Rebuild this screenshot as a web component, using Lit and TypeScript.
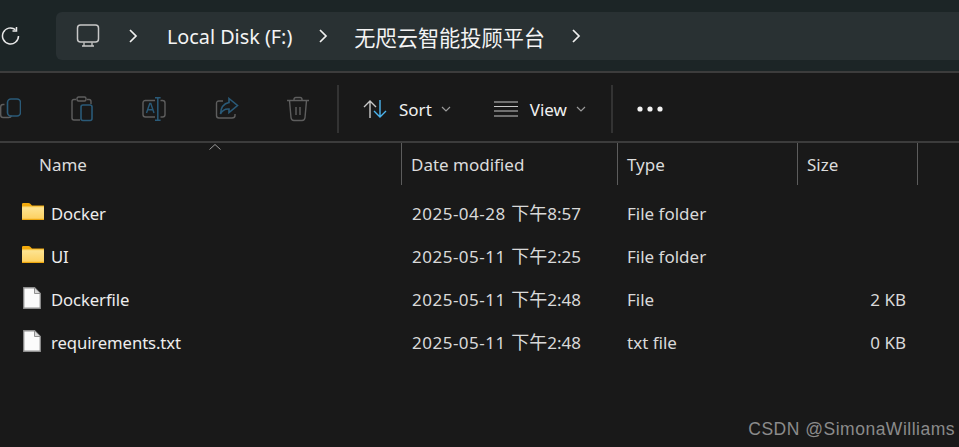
import { LitElement, html, css, svg } from "lit";
import { customElement } from "lit/decorators.js";

const folder = svg`<svg class="ficon folder" width="22" height="17" viewBox="0 0 22 17">
  <defs><linearGradient id="fg" x1="0" y1="0" x2="0" y2="1"><stop offset="0" stop-color="#fde596"/><stop offset="1" stop-color="#fdcf5c"/></linearGradient></defs>
  <path d="M0 5V1.200Q0 0 1.200 0H6.500Q7.500 0 8 .6L10 2.500H22V5Z" fill="#f3aa0c"/>
  <rect x="0" y="3.500" width="22" height="13.500" rx=".8" fill="url(#fg)"/>
  <rect x="0" y="15.800" width="22" height="1.200" fill="#eea70f"/>
  <rect x="0" y="3.200" width="22" height="1" fill="#f8c544"/>
</svg>`;
const file = svg`<svg class="ficon file" width="18" height="22" viewBox="0 0 18 22"><path d="M.75.75H11.500L17.250 6.500V21.250H.75Z" fill="#fbfbfb" stroke="#8f8f8f" stroke-width="1.300"/><path d="M11.500 1V6.500H17" fill="#d9d9d9" stroke="#8f8f8f"/></svg>`;

const rows = [
  { icon: folder, name: "Docker", ymd: "2025-04-28", time: "8:57", type: "File folder", size: "" },
  { icon: folder, name: "UI", ymd: "2025-05-11", time: "2:25", type: "File folder", size: "" },
  { icon: file, name: "Dockerfile", ymd: "2025-05-11", time: "2:48", type: "File", size: "2 KB" },
  { icon: file, name: "requirements.txt", ymd: "2025-05-11", time: "2:48", type: "txt file", size: "0 KB" },
];

const chev = svg`<svg class="crumbchev" width="10" height="16" viewBox="0 0 10 16"><path d="M2 2L8 8L2 14" fill="none" stroke="#f0f0f0" stroke-width="1.700"/></svg>`;
const drop = svg`<svg class="drop" width="10" height="6" viewBox="0 0 10 6"><path d="M1 1L5 5L9 1" fill="none" stroke="#9a9a9a" stroke-width="1.200"/></svg>`;

@customElement("app-root")
export class AppRoot extends LitElement {
  static styles = css`
    :host {
      display: block;
      position: relative;
      width: 959px;
      height: 447px;
      overflow: hidden;
      background: #191919;
      color: #e8e8e8;
      font-family: "Noto Sans", "Noto Sans CJK SC", sans-serif;
      font-size: 17px;
    }
    .nav {
      box-sizing: border-box;
      background: #1c2526;
      border-bottom: 2px solid #3c3c3c;
      height: 73px;
      display: flex;
      align-items: flex-start;
      padding: 12px 0 0 1px;
    }
    .refresh { margin: 14px 0 0 0; flex: none; }
    .addr {
      margin-left: 35px;
      flex: 1;
      height: 48px;
      background: #293133;
      border-radius: 6px 0 0 6px;
      display: flex;
      align-items: center;
      color: #f4f4f4;
      font-size: 19.8px;
    }
    .addr span { display: flex; }
    .pc { margin-left: 20px; flex: none; }
    .crumbchev { flex: none; }
    .c1 { margin-left: 28px; }
    .t1 { margin-left: 29px; }
    .c2 { margin-left: 26px; }
    .t2 { margin-left: 26px; font-size: 21.2px; }
    .c3 { margin-left: 26px; }
    .bar {
      height: 70px;
      box-sizing: border-box;
      border-bottom: 2px solid #3c3c3c;
      display: flex;
      align-items: center;
      padding-top: 4px;
      font-size: 17px;
      color: #f0f0f0;
    }
    .bar svg { flex: none; }
    .sep { width: 2px; height: 48px; background: #333; flex: none; }
    .tool { display: flex; align-items: center; flex: none; }
    .row, .head {
      display: grid;
      grid-template-columns: 402px 216px 180px 120px;
    }
    .head {
      height: 44px;
      position: relative;
      color: #dcdcdc;
    }
    .head div {
      box-sizing: border-box;
      border-right: 1px solid #5c5c5c;
      padding: 10px 0 0 10px;
      height: 42px;
    }
    .head .n { padding-left: 39px; }
    .head .f { margin-left: -1px; }
    .sort { position: absolute; left: 209px; top: 1px; }
    .list { padding-top: 5px; }
    .row {
      height: 43px;
      align-items: center;
      color: #d9d9d9;
      line-height: 24px;
    }
    .row .name { color: #ededed; display: flex; align-items: center; font-size: 16.7px; letter-spacing: -0.1px; }
    .ficon { flex: none; }
    .folder { margin: -5px 7px 0 22px; }
    .file { margin: -4px 10px 0 23px; }
    .row .c { padding-left: 9px; }
    .row .d { padding-left: 10px; }
    .ymd { letter-spacing: 0.5px; }
    .cjk { font-size: 18px; line-height: 1; margin-left: 1px; }
    .row .s { text-align: right; padding-right: 12px; }
    .mark {
      position: absolute;
      right: 4px;
      bottom: 7px;
      font-family: "Liberation Sans", sans-serif;
      font-size: 17.5px;
      color: #8b8b8b;
      letter-spacing: 0.5px;
    }
  `;

  render() {
    return html`
      <div class="nav">
        <svg class="refresh" width="20" height="20" viewBox="0 0 20 20"><path d="M17.500 10A8 8 0 1 1 14.500 3.700" fill="none" stroke="#e8e8e8" stroke-width="1.500"/><path d="M15.500 1V5H11.500" fill="none" stroke="#e8e8e8" stroke-width="1.500"/></svg>
        <div class="addr">
          <svg class="pc" width="24" height="24" viewBox="0 0 24 24"><rect x="1.500" y="1" width="21" height="17" rx="3" fill="none" stroke="#c8c8c8" stroke-width="1.500"/><path d="M8 18.500V22M16 18.500V22M6 22H18" fill="none" stroke="#c8c8c8" stroke-width="1.300"/></svg>
          <span class="c1">${chev}</span>
          <span class="t1">Local Disk (F:)</span>
          <span class="c2">${chev}</span>
          <span class="t2">无咫云智能投顾平台</span>
          <span class="c3">${chev}</span>
        </div>
      </div>
      <div class="bar">
        <svg width="21" height="22" viewBox="0 0 21 22"><path d="M4.500 6.500H3Q.7 6.500 .7 9V17Q.7 19.500 3 19.500H8.500Q11 19.500 11.500 17.500" fill="none" stroke="#5e5e5e" stroke-width="1.400"/><rect x="7.500" y="1" width="13" height="17" rx="3.500" fill="none" stroke="#2a5a78" stroke-width="1.600"/></svg>
        <svg style="margin-left:50px" width="22" height="26" viewBox="0 0 22 26"><path d="M5 3.500H3Q1 3.500 1 5.500V22Q1 24 3 24H9" fill="none" stroke="#5e5e5e" stroke-width="1.400"/><path d="M16 3.500H18Q20 3.500 20 5.500V8" fill="none" stroke="#5e5e5e" stroke-width="1.400"/><rect x="6" y="1" width="9" height="4" rx="1.500" fill="none" stroke="#5e5e5e" stroke-width="1.400"/><rect x="10" y="9" width="11" height="15.500" rx="2" fill="none" stroke="#2a5a78" stroke-width="1.600"/></svg>
        <svg style="margin-left:49px" width="24" height="24" viewBox="0 0 24 24"><path d="M13 3.500H3.500Q1 3.500 1 6V17.500Q1 20 3.500 20H13M18.500 3.500H20.500Q23 3.500 23 6V17.500Q23 20 20.500 20H18.500" fill="none" stroke="#5e5e5e" stroke-width="1.400"/><path d="M4.500 16L7.800 6.500H8.800L12 16M5.800 12.800H10.800" fill="none" stroke="#2a5a78" stroke-width="1.400"/><path d="M15.800 .8V23.200M13 .8H18.600M13 23.200H18.600" fill="none" stroke="#2a5a78" stroke-width="1.500"/></svg>
        <svg style="margin-left:49px" width="24" height="24" viewBox="0 0 24 24"><path d="M8 4H4Q1.500 4 1.500 6.500V18.500Q1.500 21 4 21H17Q20 21 20 18.500V17" fill="none" stroke="#5e5e5e" stroke-width="1.400"/><path d="M14 1.500L22.500 8.500L14 15.500V12Q8 11.500 5.500 17Q6 7 14 5.500Z" fill="none" stroke="#2a5a78" stroke-width="1.600"/></svg>
        <svg style="margin-left:47px" width="24" height="26" viewBox="0 0 24 26"><path d="M1 4.500H23M8 4.500V3.500Q8 1.500 10 1.500H14Q16 1.500 16 3.500V4.500M3.500 4.500L5 21.500Q5.300 24.500 8 24.500H16Q18.700 24.500 19 21.500L20.500 4.500M10 11V19M14 11V19" fill="none" stroke="#5e5e5e" stroke-width="1.400"/></svg>
        <div class="sep" style="margin-left:27px"></div>
        <div class="tool" style="margin-left:23px">
          <svg width="26" height="20" viewBox="0 0 26 20"><path d="M8 19V2M2 8L8 2L14 8" fill="none" stroke="#c8c8c8" stroke-width="1.400"/><path d="M18 1V18M12 12L18 18L24 12" fill="none" stroke="#4cb4ee" stroke-width="1.400"/></svg>
          <span style="margin-left:11px">Sort</span>
          <span style="margin-left:9px;display:flex">${drop}</span>
        </div>
        <div class="tool" style="margin-left:43px">
          <svg width="24" height="16" viewBox="0 0 24 16"><path d="M0 1H24M0 5.500H24M0 10H24M0 15H24" fill="none" stroke="#c8c8c8" stroke-width="1.200"/></svg>
          <span style="margin-left:12px">View</span>
          <span style="margin-left:9px;display:flex">${drop}</span>
        </div>
        <div class="sep" style="margin-left:25px"></div>
        <svg style="margin-left:24px" width="26" height="6" viewBox="0 0 26 6"><circle cx="3" cy="3" r="2.600" fill="#f2f2f2"/><circle cx="13" cy="3" r="2.600" fill="#f2f2f2"/><circle cx="23" cy="3" r="2.600" fill="#f2f2f2"/></svg>
      </div>
      <div class="head">
        <div class="n">Name</div>
        <div class="f">Date modified</div>
        <div class="f">Type</div>
        <div class="f">Size</div>
        <svg class="sort" width="12" height="6" viewBox="0 0 12 6"><path d="M.5 5.500L6 .5L11.500 5.500" fill="none" stroke="#9a9a9a"/></svg>
      </div>
      <div class="list">
        ${rows.map(
          (r) => html`<div class="row">
            <div class="name">${r.icon}<span>${r.name}</span></div>
            <div class="d"><span class="ymd">${r.ymd}</span> <span class="cjk">下午</span>${r.time}</div>
            <div class="c">${r.type}</div>
            <div class="s">${r.size}</div>
          </div>`
        )}
      </div>
      <div class="mark">CSDN @SimonaWilliams</div>
    `;
  }
}
